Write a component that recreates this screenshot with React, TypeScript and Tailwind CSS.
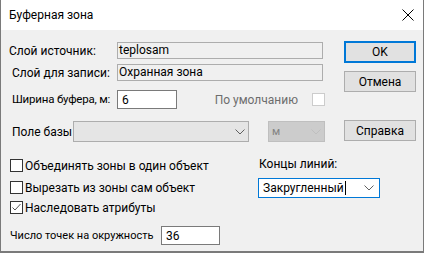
import React from "react";

const font = { fontFamily: 'Roboto, "Noto Sans", "Liberation Sans", sans-serif' };

function Chevron({ color = "#606060" }: { color?: string }) {
  return (
    <svg width="10" height="6" viewBox="0 0 10 6" className="shrink-0">
      <path d="M0.5 0.5 L5 5 L9.5 0.5" fill="none" stroke={color} strokeWidth="1" />
    </svg>
  );
}

function CheckBox({ checked }: { checked?: boolean }) {
  return (
    <div className="w-[13px] h-[13px] border border-[#333333] bg-white shrink-0 flex items-center justify-center">
      {checked && (
        <svg width="11" height="11" viewBox="0 0 11 11">
          <path d="M1.5 5.5 L4 8 L9.5 2" fill="none" stroke="#555555" strokeWidth="1" />
        </svg>
      )}
    </div>
  );
}

export default function App() {
  return (
    <div
      className="w-[424px] h-[253px] bg-[#f0f0f0] border-l border-r border-b-2 border-[#7a7a7a] flex flex-col text-[12px] leading-none text-black overflow-hidden whitespace-nowrap"
      style={font}
    >
      {/* Title bar */}
      <div className="h-[30px] bg-white flex items-center justify-between pl-[8px] pr-[9px] shrink-0">
        <span className="text-[12px]">Буферная зона</span>
        <svg width="12" height="12" viewBox="0 0 12 12">
          <path d="M0.5 0.5 L11.5 11.5 M11.5 0.5 L0.5 11.5" stroke="#000" strokeWidth="1" />
        </svg>
      </div>

      {/* Top section */}
      <div className="flex h-[112px] shrink-0">
        <div className="w-[343px] shrink-0 flex flex-col">
          <div className="flex items-center h-[17px] mt-[12px]">
            <span className="w-[116px] shrink-0 pl-[8px]">Слой источник:</span>
            <div className="w-[206px] shrink-0 h-[17px] border border-[#adadad] bg-[#f0f0f0] flex items-center pl-[1px] pb-[2px]">
              teplosam
            </div>
          </div>
          <div className="flex items-center h-[17px] mt-[5px]">
            <span className="w-[116px] shrink-0 pl-[11px]">Слой для записи:</span>
            <div className="w-[206px] shrink-0 h-[17px] border border-[#adadad] bg-[#f0f0f0] flex items-center pl-[1px] pb-[2px]">
              Охранная зона
            </div>
          </div>
          <div className="flex items-center h-[19px] mt-[9px]">
            <span className="w-[116px] shrink-0 pl-[11px] text-[11.5px] tracking-[-0.2px]">Ширина буфера, м:</span>
            <div className="w-[60px] shrink-0 h-[19px] border border-[#7a7a7a] bg-white flex items-center pl-[4px]">
              6
            </div>
            <span className="ml-auto text-[#6d6d6d]">По умолчанию</span>
            <div className="ml-[14px] mr-[19px] w-[13px] h-[13px] shrink-0 border border-[#cccccc] bg-white" />
          </div>
          <div className="flex items-center h-[21px] mt-[12px]">
            <span className="w-[72px] shrink-0 pl-[11px]">Поле базы</span>
            <div className="w-[176px] shrink-0 h-[21px] border border-[#adadad] bg-[#e5e5e5] flex items-center justify-end pr-[3px]">
              <Chevron />
            </div>
            <div className="ml-[19px] w-[57px] shrink-0 h-[21px] border border-[#bfbfbf] bg-[#cccccc] flex items-center justify-between pl-[3px] pr-[3px]">
              <span className="text-[#838383] text-[11px]">м</span>
              <Chevron color="#bfbfbf" />
            </div>
          </div>
        </div>
        <div className="w-[72px] shrink-0 flex flex-col">
          <div className="mt-[11px] h-[22px] border-2 border-[#0078d7] bg-[#e1e1e1] flex items-center justify-center">
            OK
          </div>
          <div className="mt-[8px] h-[21px] border border-[#adadad] bg-[#e1e1e1] flex items-center justify-center">
            Отмена
          </div>
          <div className="mt-[28px] h-[21px] border border-[#adadad] bg-[#e1e1e1] flex items-center justify-center">
            Справка
          </div>
        </div>
      </div>

      {/* Bottom section */}
      <div className="flex">
        <div className="w-[257px] shrink-0 flex flex-col pl-[9px]">
          <div className="flex items-center gap-[2px] mt-[17px] h-[13px]">
            <CheckBox />
            <span>Объединять зоны в один объект</span>
          </div>
          <div className="flex items-center gap-[2px] mt-[9px] h-[13px]">
            <CheckBox />
            <span>Вырезать из зоны сам объект</span>
          </div>
          <div className="flex items-center gap-[2px] mt-[7px] h-[13px]">
            <CheckBox checked />
            <span>Наследовать атрибуты</span>
          </div>
          <div className="flex items-center mt-[12px] h-[19px]">
            <span className="w-[151px] shrink-0 text-[11px]">Число точек на окружность</span>
            <div className="w-[59px] shrink-0 h-[19px] border border-[#7a7a7a] bg-white flex items-center pl-[4px]">
              36
            </div>
          </div>
        </div>
        <div className="flex flex-col">
          <span className="mt-[16px] pl-[1px]">Концы линий:</span>
          <div className="mt-[8px] w-[122px] h-[20px] border border-[#0078d7] bg-white flex items-center justify-between pl-[4px] pr-[5px]">
            <span className="flex items-center">
              Закругленный
              <span className="inline-block w-[1px] h-[14px] bg-black ml-[1px]" />
            </span>
            <Chevron />
          </div>
        </div>
      </div>
    </div>
  );
}
